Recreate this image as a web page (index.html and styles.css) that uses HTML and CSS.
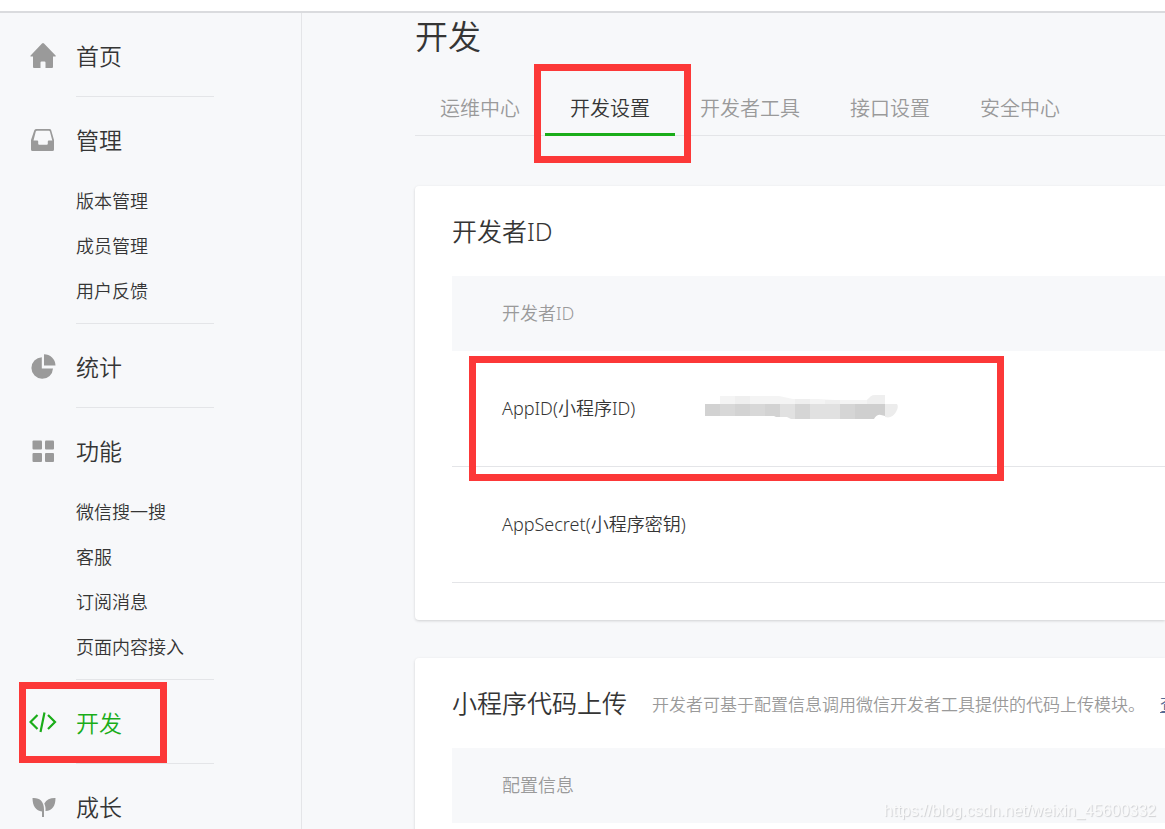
FILE: index.html
```html
<!DOCTYPE html>
<html lang="zh-CN">
<head>
<meta charset="utf-8">
<title>开发</title>
<link rel="stylesheet" href="styles.css">
</head>
<body>
<header class="topbar"></header>
<div class="layout">
  <nav class="sidebar">
    <section class="group">
      <a class="group-title" href="#">
        <svg class="icon" viewBox="0 0 28 28"><path d="M14 1q.6 0 1 .4L26.600 13.500q.8 1-.4 1H24V25q0 1-1 1h-6.500v-5.500q0-1-1-1h-3q-1 0-1 1V26H5q-1 0-1-1V14.500H2q-1.300 0-.4-1L13 1.400q.4-.4 1-.4z"/></svg>
        首页</a>
    </section>
    <section class="group">
      <a class="group-title" href="#">
        <svg class="icon" viewBox="0 0 28 28"><path fill-rule="evenodd" d="M7.500 3h13q1.300 0 1.700 1.200L25 14v9.500q0 1.500-1.500 1.500h-20Q2 25 2 23.500V14L5.300 4.200Q5.900 3 7.500 3zM8 4.700q-.9 0-1.200.8L4.500 14.500H8.200q1 0 1 1v2.300q0 1 1 1h7.600q1 0 1-1v-2.300q0-1 1-1h3.500L20.900 5.500q-.2-.8-1-.8z"/></svg>
        管理</a>
      <ul class="sub">
        <li><a href="#">版本管理</a></li>
        <li><a href="#">成员管理</a></li>
        <li><a href="#">用户反馈</a></li>
      </ul>
    </section>
    <section class="group">
      <a class="group-title" href="#">
        <svg class="icon" viewBox="0 0 28 28"><path d="M12.800 4.200V15.500h11.200A10.800 10.800 0 1 1 12.800 4.200zM15 1.300A11.500 11.500 0 0 1 26.500 12.500H15z"/></svg>
        统计</a>
    </section>
    <section class="group">
      <a class="group-title" href="#">
        <svg class="icon" viewBox="0 0 28 28"><rect x="3.500" y="3.500" width="9.500" height="9" rx="1"/><rect x="16" y="3.500" width="9" height="9" rx="1"/><rect x="3.500" y="16" width="9.500" height="9" rx="1"/><rect x="16" y="16" width="9" height="9" rx="1"/></svg>
        功能</a>
      <ul class="sub">
        <li><a href="#">微信搜一搜</a></li>
        <li><a href="#">客服</a></li>
        <li><a href="#">订阅消息</a></li>
        <li><a href="#">页面内容接入</a></li>
      </ul>
    </section>
    <section class="group marked">
      <a class="group-title active" href="#">
        <svg class="icon line" viewBox="0 0 28 28"><path d="M8.500 6 1.500 13l7 7M19 6l7 7-7 7M15.500 3.500l-4 19.500"/></svg>
        开发</a>
      <span class="mark mark-nav"></span>
    </section>
    <section class="group">
      <a class="group-title" href="#">
        <svg class="icon" viewBox="0 0 28 28"><path d="M3.500 5C10.500 4.500 15 8 15 16.500v7.500h-2v-5.500C7 18 3.500 13 3.500 5zM26.500 5C26.500 13 23.500 17.500 16.500 18c.3-3-.2-5.300-1.200-7.500C17.500 6.500 21.500 4.800 26.500 5z"/></svg>
        成长</a>
    </section>
  </nav>

  <main class="content">
    <h1 class="page-title">开发</h1>
    <nav class="tabs">
      <a class="tab" href="#">运维中心</a>
      <a class="tab current" href="#">开发设置<span class="mark mark-tab"></span></a>
      <a class="tab" href="#">开发者工具</a>
      <a class="tab" href="#">接口设置</a>
      <a class="tab" href="#">安全中心</a>
    </nav>

    <section class="card">
      <div class="card-head"><h2>开发者ID</h2></div>
      <table class="table">
        <thead><tr><th colspan="2">开发者ID</th></tr></thead>
        <tbody>
          <tr class="marked">
            <td class="name">AppID(小程序ID)<span class="mark mark-row"></span></td>
            <td>
              <svg class="mosaic" viewBox="0 0 193 24">
                <path fill="#f4f4f4" d="M15 1h59l14 3h24l18 1h32l6-5h12v9H15z"/>
                <path fill="#efefef" d="M30 1h15v8H30zM90 4h15v5H90zM120 5h15v4h-15zM162 5l4-4 4-1h10v9h-18z"/>
                <path fill="#d2d2d2" d="M0 9h15v12H0z"/>
                <path fill="#d8d8d8" d="M15 9h60v12H15z"/>
                <path fill="#d3d3d3" d="M30 9h15v12H30zM60 9h15v13h-4l-2-1h-9z"/>
                <path fill="#e1e1e1" d="M75 9h15v15h-4l-4-2h-7zM105 9h30v15h-30z"/>
                <path fill="#d5d5d5" d="M90 9h15v15H90zM135 9h15v15h-15z"/>
                <path fill="#cfcfcf" d="M150 9h30v12l-4-1q-4-1-7 4h-19z"/>
                <path fill="#ececec" d="M180 9h12q2 3-1 8-4 7-11 5z"/>
              </svg>
            </td>
          </tr>
          <tr><td class="name">AppSecret(小程序密钥)</td><td></td></tr>
        </tbody>
      </table>
    </section>

    <section class="card">
      <div class="card-head">
        <h2>小程序代码上传</h2>
        <p class="desc">开发者可基于配置信息调用微信开发者工具提供的代码上传模块。</p>
        <a class="more" href="#">查看详情</a>
      </div>
      <table class="table">
        <thead><tr><th colspan="2">配置信息</th></tr></thead>
        <tbody><tr><td class="name"></td><td></td></tr></tbody>
      </table>
    </section>
  </main>
</div>
<div class="watermark">https://blog.csdn.net/weixin_45600332</div>
</body>
</html>
```
FILE: styles.css
```css
* { box-sizing: border-box; }

body {
  margin: 0;
  height: 100vh;
  display: flex;
  flex-direction: column;
  overflow: hidden;
  background: #f7f8fa;
  color: #353535;
  font-family: "Noto Sans", "Noto Sans CJK SC", sans-serif;
  font-weight: 350;
  font-size: 18px;
}

a { color: inherit; text-decoration: none; }
h1, h2, p, ul { margin: 0; padding: 0; font-weight: inherit; }

.topbar {
  flex: none;
  height: 13px;
  background: #fff;
  border-bottom: 2px solid #dadbde;
}

.layout {
  flex: 1;
  min-height: 0;
  display: flex;
  overflow: hidden;
}

.sidebar {
  flex: none;
  width: 302px;
  height: max-content;
  border-right: 1px solid #e4e5e8;
}

.group {
  width: 138px;
  margin-left: 76px;
  padding: 27px 0 9px;
}
.group + .group { border-top: 1px solid #e4e5e8; }

.group-title {
  display: flex;
  align-items: center;
  gap: 19px;
  margin-left: -47px;
  padding-bottom: 15px;
  font-size: 23px;
  line-height: 32px;
}
.group-title.active { color: #1aad19; }

.icon { width: 28px; height: 28px; fill: #9a9a9a; }
.icon.line { fill: none; stroke: #1aad19; stroke-width: 2.2; }

.sub { margin-top: 8px; list-style: none; line-height: 45px; }

.content {
  flex: 1;
  min-width: 0;
  padding-left: 113px;
}

.page-title { font-size: 33px; line-height: 48px; }

.tabs {
  display: flex;
  margin: 19px 0 50px;
  border-bottom: 1px solid #e4e5e8;
  color: #9a9a9a;
  font-size: 20px;
  line-height: 53px;
  white-space: nowrap;
}
.tab { padding: 2px 25px 0; }
.tab.current {
  position: relative;
  height: 56px;
  margin-bottom: -1px;
  border-bottom: 3px solid #1aad19;
  color: #353535;
}

.card {
  margin-bottom: 38px;
  padding: 29px 0 37px 37px;
  background: #fff;
  border-radius: 4px 0 0 4px;
  box-shadow: 0 1px 3px rgba(0, 0, 0, 0.16);
}
.card-head {
  display: flex;
  align-items: center;
  margin-bottom: 29px;
  white-space: nowrap;
}
.card-head h2 { font-size: 25px; line-height: 32px; }
.desc { margin: 0 15px 0 25px; color: #9a9a9a; font-size: 17px; }
.more { color: #576b95; text-decoration: underline; }

.table { width: 100%; border-collapse: separate; border-spacing: 0; text-align: left; }
.table th {
  height: 75px;
  padding: 0 50px 3px;
  background: #f7f8fa;
  color: #9a9a9a;
  font-weight: inherit;
}
.table td { height: 116px; padding: 0 0 3px; border-bottom: 1px solid #e4e5e8; }
.table .name { width: 253px; padding-left: 50px; white-space: nowrap; }

.mosaic { display: block; width: 193px; height: 24px; }

/* Highlight frames laid over the page */
.marked { position: relative; }
.mark { position: absolute; border: 7px solid #fc3838; pointer-events: none; }
.mark-nav { left: -57px; top: 2px; width: 148px; height: 81px; }
.mark-tab { left: -11px; right: -16px; top: -16px; bottom: -30px; }
.mark-row { left: 17px; top: 5px; width: 535px; height: 125px; z-index: 1; }

.watermark {
  position: fixed;
  right: 9px;
  bottom: 8px;
  color: #fafafa;
  font: 16px/20px "Liberation Sans", sans-serif;
  text-shadow: 1px 1px 1px #cfd0d3;
}
```
